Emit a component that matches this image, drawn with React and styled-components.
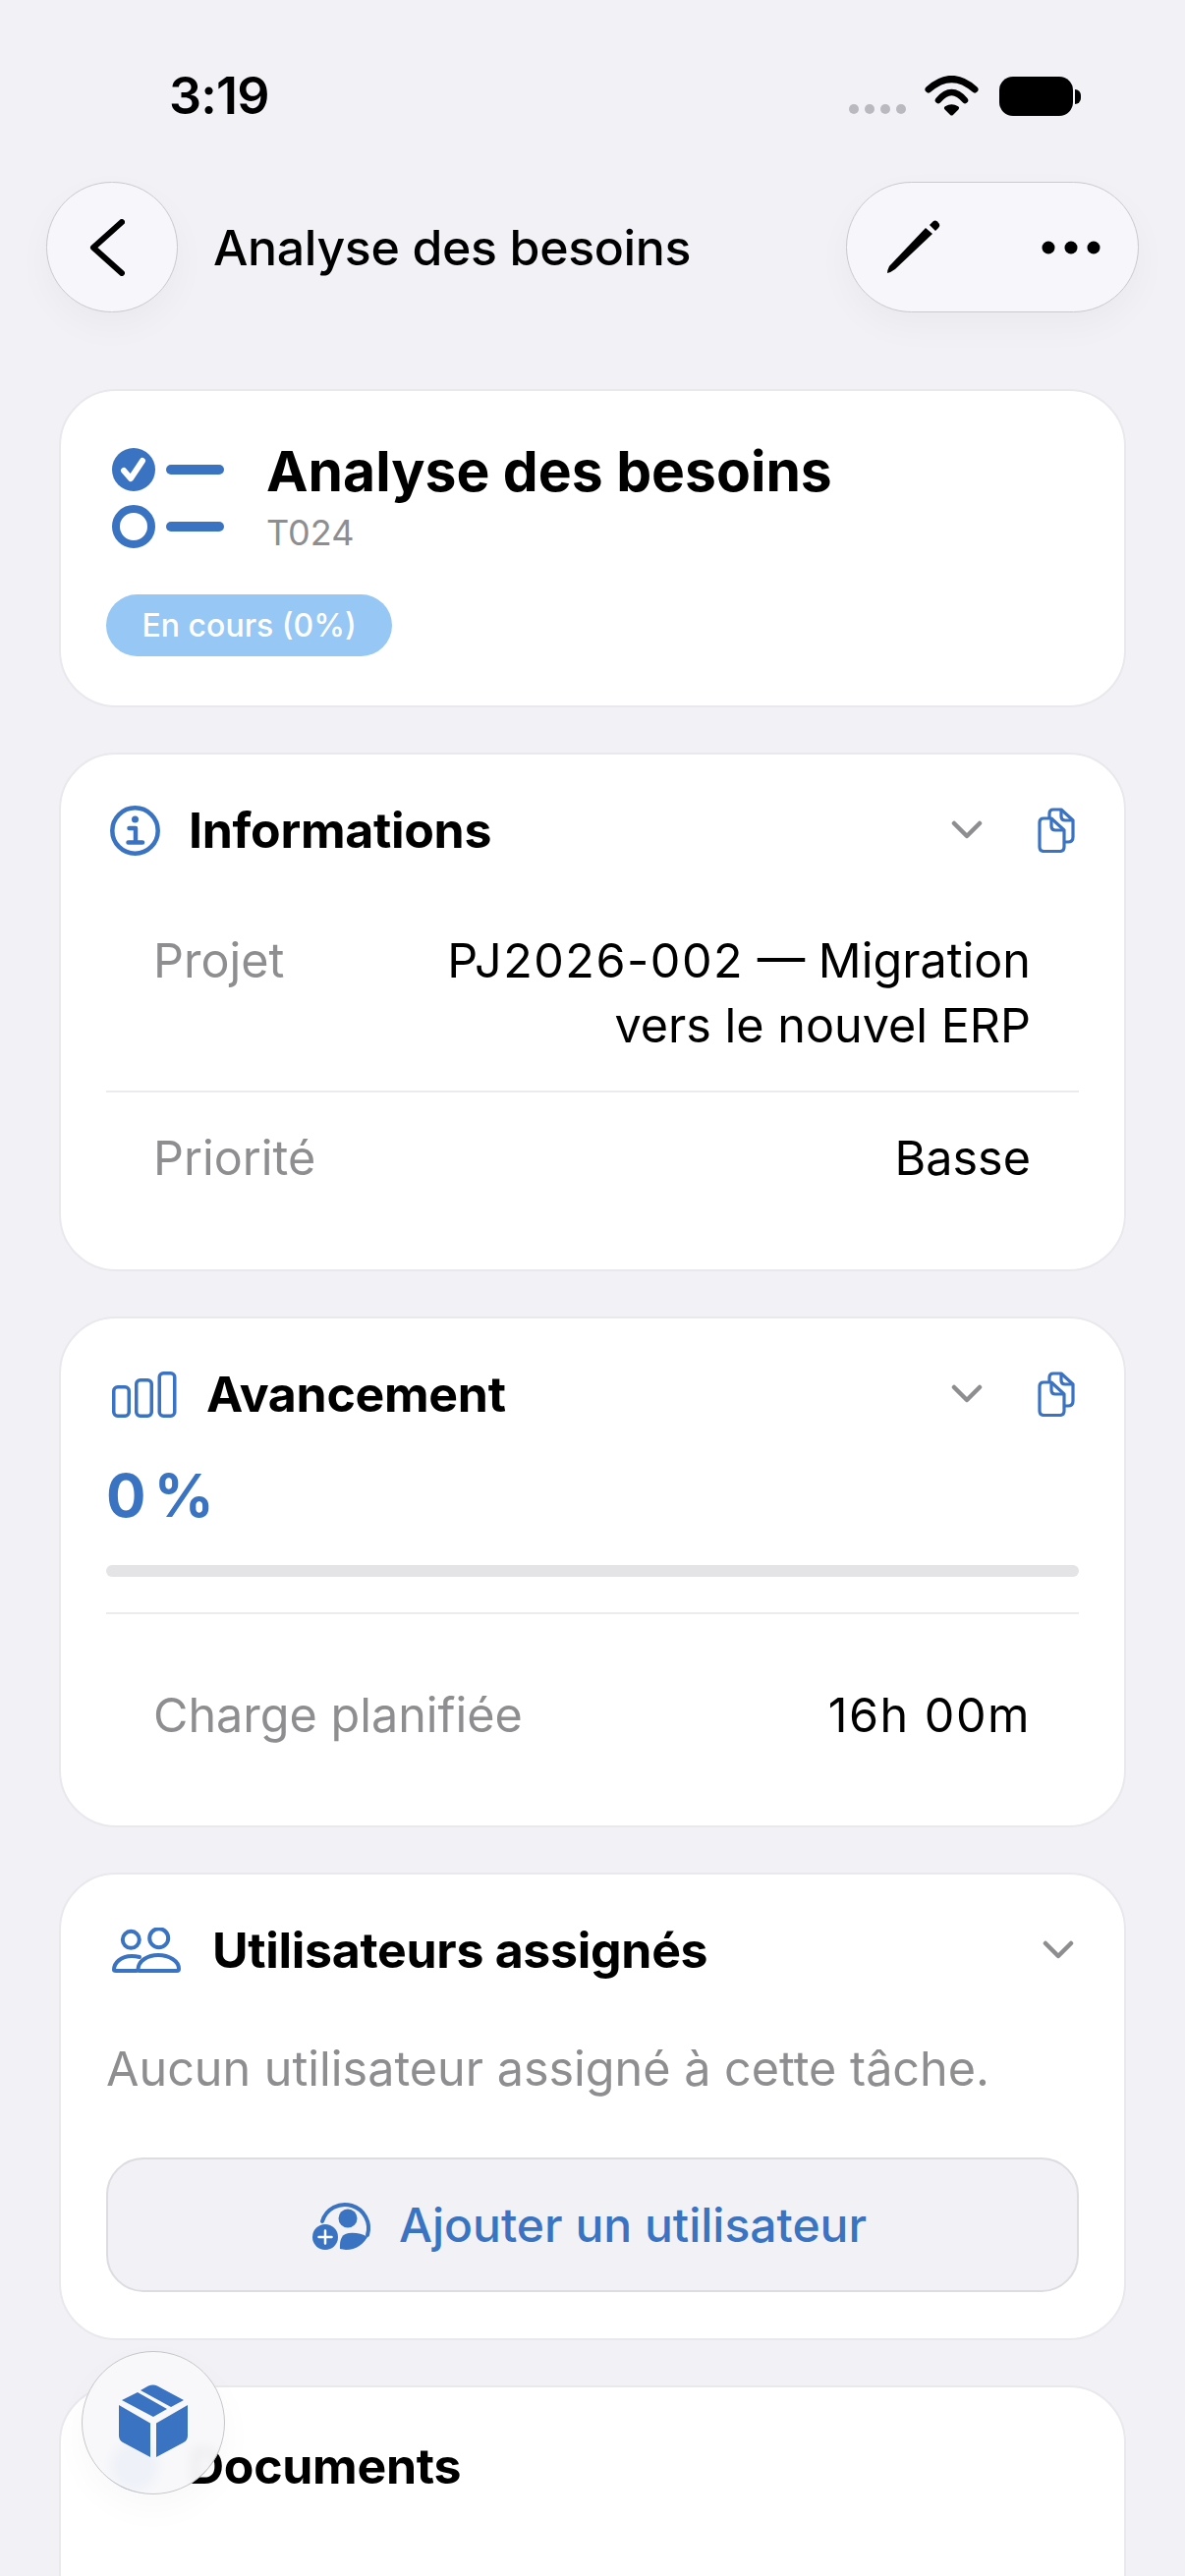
import React from 'react';
import styled, { createGlobalStyle } from 'styled-components';

const BLUE = '#3a73c2';
const GRAY = '#8e8e90';

const GlobalStyle = createGlobalStyle`
  html, body {
    margin: 0;
    padding: 0;
    background: #f1f1f6;
  }
  body {
    font-family: Inter, "Liberation Sans", sans-serif;
    color: #000;
  }
`;

const Screen = styled.div`
  position: relative;
  width: 1206px;
  height: 2622px;
  overflow: hidden;
  background: #f1f1f6;
`;

const StatusBar = styled.div`
  height: 185px;
  box-sizing: border-box;
  padding: 72px 114px 0 172px;
  display: flex;
  justify-content: space-between;
  align-items: flex-start;
`;

const Clock = styled.div`
  font-size: 52px;
  line-height: 52px;
  font-weight: 600;
  letter-spacing: -0.8px;
`;

const StatusIcons = styled.div`
  display: flex;
  align-items: flex-start;
  margin-top: 5px;
`;

const SignalDots = styled.div`
  display: flex;
  gap: 6px;
  margin: 29px 19px 0 0;
`;

const SignalDot = styled.span`
  width: 10px;
  height: 10px;
  border-radius: 50%;
  background: #b9b9bf;
`;

const Battery = styled.div`
  width: 75px;
  height: 40px;
  margin: 1px 0 0 21px;
  border-radius: 14px;
  background: #000;
  position: relative;
  &::after {
    content: '';
    position: absolute;
    right: -8px;
    top: 13px;
    width: 6px;
    height: 15px;
    border-radius: 0 6px 6px 0;
    background: #000;
  }
`;

const NavBar = styled.div`
  height: 133px;
  padding: 0 47px;
  display: flex;
  align-items: center;
`;

const GlassButton = styled.div`
  height: 133px;
  box-sizing: border-box;
  border-radius: 67px;
  border: 1.5px solid #c9c9ce;
  background: #f7f7fb;
  box-shadow: 0 14px 36px rgba(0, 0, 0, 0.035);
  display: flex;
  align-items: center;
`;

const BackButton = styled(GlassButton)`
  width: 134px;
  padding-left: 43px;
`;

const ActionsPill = styled(GlassButton)`
  width: 298px;
  margin-left: auto;
  padding: 0 38px 0 39px;
  justify-content: space-between;
`;

const NavTitle = styled.div`
  margin-left: 36px;
  font-size: 50px;
  font-weight: 500;
  letter-spacing: -0.35px;
`;

const CardList = styled.div`
  margin-top: 78px;
  padding: 0 60px;
  display: flex;
  flex-direction: column;
  gap: 46px;
`;

const Card = styled.section`
  box-sizing: border-box;
  min-height: ${(p) => p.$height}px;
  padding: ${(p) => p.$top || 46}px 46px 0;
  background: #fff;
  border: 2px solid #e8e8ed;
  border-radius: 58px;
`;

const HeroRow = styled.div`
  display: flex;
  gap: 41px;
  padding-left: 6px;
`;

const HeroIconWrap = styled.div`
  margin-top: 12px;
  height: 104px;
`;

const HeroText = styled.div`
  margin-top: 3px;
  display: flex;
  flex-direction: column;
`;

const HeroTitle = styled.h1`
  margin: 0;
  font-size: 57px;
  line-height: 66px;
  font-weight: 700;
`;

const HeroCode = styled.div`
  margin-top: 9px;
  font-size: 36px;
  line-height: 40px;
  color: ${GRAY};
`;

const Badge = styled.div`
  display: inline-block;
  margin-top: 43px;
  padding: 0 36.5px;
  height: 63px;
  line-height: 63px;
  border-radius: 32px;
  background: #96c7f5;
  color: #fff;
  font-size: 32px;
  font-weight: 500;
`;

const SectionHead = styled.div`
  height: 62px;
  display: flex;
  align-items: center;
  gap: ${(p) => p.$gap}px;
`;

const SectionIcon = styled.div`
  display: flex;
  margin-left: ${(p) => p.$left}px;
`;

const SectionTitle = styled.h2`
  margin: 0;
  font-size: 50px;
  font-weight: 700;
  letter-spacing: -0.3px;
`;

const HeadActions = styled.div`
  margin-left: auto;
  display: flex;
  align-items: center;
  gap: 56px;
  margin-right: ${(p) => p.$right}px;
`;

const Row = styled.div`
  display: flex;
  justify-content: space-between;
  padding: 0 49px 0 48px;
  font-size: 48.5px;
  line-height: 66px;
  font-weight: 400;
`;

const InfoRows = styled.div`
  margin-top: ${(p) => p.$top}px;
`;

const RowLabel = styled.div`
  color: ${GRAY};
  white-space: nowrap;
`;

const RowValue = styled.div`
  text-align: right;
`;

// digits run wider in the original font
const Numeric = styled.span`
  letter-spacing: 1.5px;
`;

const Divider = styled.div`
  height: 1.5px;
  background: #ececf0;
  margin: ${(p) => p.$margin};
`;

const Percent = styled.div`
  margin-top: 36px;
  font-size: 60px;
  line-height: 72px;
  font-weight: 700;
  letter-spacing: -1.5px;
  word-spacing: -3px;
  color: ${BLUE};
`;

const Track = styled.div`
  height: 12px;
  margin-top: 35px;
  border-radius: 6px;
  background: #e4e4e6;
`;

const Fill = styled.div`
  height: 100%;
  border-radius: 6px;
  background: ${BLUE};
`;

const EmptyText = styled.p`
  margin: 60px 0 0;
  font-size: 48.5px;
  line-height: 60px;
  color: ${GRAY};
`;

const AddButton = styled.button`
  width: 100%;
  height: 137px;
  margin-top: 60px;
  padding: 0 6px 0 0;
  box-sizing: border-box;
  border: 2px solid #dcdce1;
  border-radius: 38px;
  background: #f1f1f6;
  color: ${BLUE};
  font-family: inherit;
  font-size: 48px;
  font-weight: 500;
  display: flex;
  align-items: center;
  justify-content: center;
  gap: 26px;
`;

const FloatingBox = styled.div`
  position: absolute;
  left: 83px;
  top: 2393px;
  width: 146px;
  height: 146px;
  box-sizing: border-box;
  border-radius: 50%;
  border: 1.5px solid #c6c6c9;
  background: rgba(248, 248, 250, 0.95);
  backdrop-filter: blur(6px);
  box-shadow: 0 14px 36px rgba(0, 0, 0, 0.03);
  display: flex;
  align-items: center;
  justify-content: center;
  padding-bottom: 2px;
`;

const BackIcon = () => (
  <svg width="36" height="58" viewBox="0 0 36 58" fill="none">
    <path d="M33 3 L4 29 L33 55" stroke="#000" strokeWidth="6" strokeLinecap="round" strokeLinejoin="round" />
  </svg>
);

const WifiIcon = () => (
  <svg width="55" height="41" viewBox="0 0 55 41" fill="none" stroke="#000" strokeLinecap="round">
    <path d="M4 14 Q27.500 -7 51 14" strokeWidth="7" />
    <path d="M14 25 Q27.500 9 41 25" strokeWidth="6.500" />
    <path d="M27.500 38.500 L22 33 Q27.500 29.500 33 33 Z" fill="#000" strokeWidth="4" strokeLinejoin="round" />
  </svg>
);

const PencilIcon = () => (
  <svg width="56" height="56" viewBox="0 0 56 56" fill="#000">
    <path d="M2 54 Q2 51 4 47 L41 8 L48 14 L10 50 Q6 53 2 54 Z" />
    <path d="M45 5 L49 1 Q51 0 53 1.500 L55 4 Q56 6 54 8 L51 11 Z" />
  </svg>
);

const DotsIcon = () => (
  <svg width="60" height="14" viewBox="0 0 60 14" fill="#000">
    <circle cx="7" cy="7" r="6.500" />
    <circle cx="30" cy="7" r="6.500" />
    <circle cx="53" cy="7" r="6.500" />
  </svg>
);

const TaskIcon = () => (
  <svg width="116" height="104" viewBox="0 0 116 104" fill="none">
    <circle cx="22" cy="22" r="22" fill={BLUE} />
    <path d="M12 23 L19 31 L31 13" stroke="#fff" strokeWidth="6" strokeLinecap="round" strokeLinejoin="round" />
    <rect x="55" y="17" width="59" height="10" rx="5" fill={BLUE} />
    <circle cx="22" cy="80" r="18" stroke={BLUE} strokeWidth="8" />
    <rect x="55" y="75" width="59" height="10" rx="5" fill={BLUE} />
  </svg>
);

const InfoIcon = () => (
  <svg width="51" height="51" viewBox="0 0 51 51" fill="none">
    <circle cx="25.500" cy="25.500" r="23.200" stroke={BLUE} strokeWidth="4.500" />
    <circle cx="25.500" cy="14" r="3.500" fill={BLUE} />
    <path d="M19.500 23 H26 V37 M18.500 37.500 H33" stroke={BLUE} strokeWidth="4.500" strokeLinecap="round" strokeLinejoin="round" />
  </svg>
);

const ChevronIcon = () => (
  <svg width="32" height="20" viewBox="0 0 32 20" fill="none">
    <path d="M3 3 L16 16 L29 3" stroke={GRAY} strokeWidth="4.500" strokeLinecap="round" strokeLinejoin="round" />
  </svg>
);

const CopyIcon = () => (
  <svg width="38" height="46" viewBox="0 0 38 46" fill="none" stroke={BLUE} strokeWidth="3.200" strokeLinejoin="round">
    <path d="M12 10 V6 Q12 2 16 2 H24 L36 13 V30 Q36 35 31 35 H28" />
    <path d="M24 2 V9 Q24 13 28 13 H36" />
    <path d="M2 15 Q2 11 6 11 H14 L27 23 V40 Q27 44.500 22.500 44.500 H6.500 Q2 44.500 2 40 Z" />
    <path d="M14 11 V19 Q14 23 18 23 H27" />
  </svg>
);

const BarsIcon = () => (
  <svg width="66" height="47" viewBox="0 0 66 47" fill="none" stroke={BLUE} strokeWidth="3.500">
    <rect x="1.750" y="15.750" width="15.500" height="29.500" rx="4" />
    <rect x="24.750" y="8.750" width="15.500" height="36.500" rx="4" />
    <rect x="48.250" y="1.750" width="15.500" height="43.500" rx="4" />
  </svg>
);

const UsersIcon = () => (
  <svg width="70" height="46" viewBox="0 0 70 46" fill="none" stroke={BLUE} strokeWidth="4" strokeLinecap="round">
    <circle cx="19.300" cy="12.300" r="8.500" />
    <circle cx="47.700" cy="10.700" r="9.500" />
    <path d="M28 30 Q24 29 20 29 C9 29 2 36 2 43 Q2 44 4 44 H25" />
    <path d="M28 44 Q26.500 44 26.500 42 C27 34 36 28 47 28 C58 28 68 34 68 42 Q68 44 66 44 Z" />
  </svg>
);

const UserPlusIcon = () => (
  <svg width="62" height="52" viewBox="0 0 62 52" fill="none">
    <path d="M10 22 A 24 24 0 1 1 56 36" stroke={BLUE} strokeWidth="4" strokeLinecap="round" />
    <circle cx="36" cy="19" r="9.500" fill={BLUE} />
    <path d="M28 50 Q27 35 37 34 Q48 33 56 38 Q48 51 34 51 Z" fill={BLUE} />
    <circle cx="13" cy="38" r="13" fill={BLUE} />
    <path d="M13 31.500 V44.500 M6.500 38 H19.500" stroke="#fff" strokeWidth="2.500" strokeLinecap="round" />
  </svg>
);

const BoxIcon = () => (
  <svg width="70" height="76" viewBox="0 0 70 76" fill={BLUE}>
    <path d="M0 21 L32 39.500 V74 L4 59 Q0 57 0 52 Z" />
    <path d="M38 39.500 L70 21 V52 Q70 57 66 59 L38 74 Z" />
    <path d="M3 16 L19 8 L49 25 L35 33 Z" />
    <path d="M22 6 L30 1.500 Q35 -0.500 39 1.500 L66 16 L53 23 Z" />
  </svg>
);

const DocsHeadIcon = () => (
  <svg width="50" height="50" viewBox="0 0 50 50" fill={BLUE}>
    <circle cx="25" cy="25" r="25" />
  </svg>
);

const CardHead = ({ icon, left = 0, gap, title, chevron, copy }) => (
  <SectionHead $gap={gap}>
    <SectionIcon $left={left}>{icon}</SectionIcon>
    <SectionTitle>{title}</SectionTitle>
    {chevron && (
      <HeadActions $right={copy ? 4 : 5}>
        <ChevronIcon />
        {copy && <CopyIcon />}
      </HeadActions>
    )}
  </SectionHead>
);

const App = () => (
  <Screen>
    <GlobalStyle />
    <StatusBar>
      <Clock>3:19</Clock>
      <StatusIcons>
        <SignalDots>
          {[0, 1, 2, 3].map((i) => (
            <SignalDot key={i} />
          ))}
        </SignalDots>
        <WifiIcon />
        <Battery />
      </StatusIcons>
    </StatusBar>
    <NavBar>
      <BackButton>
        <BackIcon />
      </BackButton>
      <NavTitle>Analyse des besoins</NavTitle>
      <ActionsPill>
        <PencilIcon />
        <DotsIcon />
      </ActionsPill>
    </NavBar>
    <CardList>
      <Card $height={324}>
        <HeroRow>
          <HeroIconWrap>
            <TaskIcon />
          </HeroIconWrap>
          <HeroText>
            <HeroTitle>Analyse des besoins</HeroTitle>
            <HeroCode>T024</HeroCode>
          </HeroText>
        </HeroRow>
        <Badge>En cours (0%)</Badge>
      </Card>
      <Card $height={528}>
        <CardHead icon={<InfoIcon />} left={4} gap={29} title="Informations" chevron copy />
        <InfoRows $top={69}>
          <Row>
            <RowLabel>Projet</RowLabel>
            <RowValue>
              <Numeric>PJ2026-002</Numeric> — Migration
              <br />
              vers le nouvel ERP
            </RowValue>
          </Row>
          <Divider $margin="33px 0 34px" />
          <Row>
            <RowLabel>Priorité</RowLabel>
            <RowValue>Basse</RowValue>
          </Row>
        </InfoRows>
      </Card>
      <Card $height={520}>
        <CardHead icon={<BarsIcon />} left={6} gap={30} title="Avancement" chevron copy />
        <Percent>0 %</Percent>
        <Track>
          <Fill style={{ width: '0%' }} />
        </Track>
        <Divider $margin="36px 0 0" />
        <InfoRows $top={70}>
          <Row>
            <RowLabel>Charge planifiée</RowLabel>
            <RowValue>
              <Numeric>16h 00m</Numeric>
            </RowValue>
          </Row>
        </InfoRows>
      </Card>
      <Card $height={476}>
        <CardHead icon={<UsersIcon />} left={6} gap={32} title="Utilisateurs assignés" chevron />
        <EmptyText>Aucun utilisateur assigné à cette tâche.</EmptyText>
        <AddButton>
          <UserPlusIcon />
          Ajouter un utilisateur
        </AddButton>
      </Card>
      <Card $height={300} $top={49}>
        <CardHead icon={<DocsHeadIcon />} left={4} gap={30} title="Documents" />
      </Card>
    </CardList>
    <FloatingBox>
      <BoxIcon />
    </FloatingBox>
  </Screen>
);

export default App;
